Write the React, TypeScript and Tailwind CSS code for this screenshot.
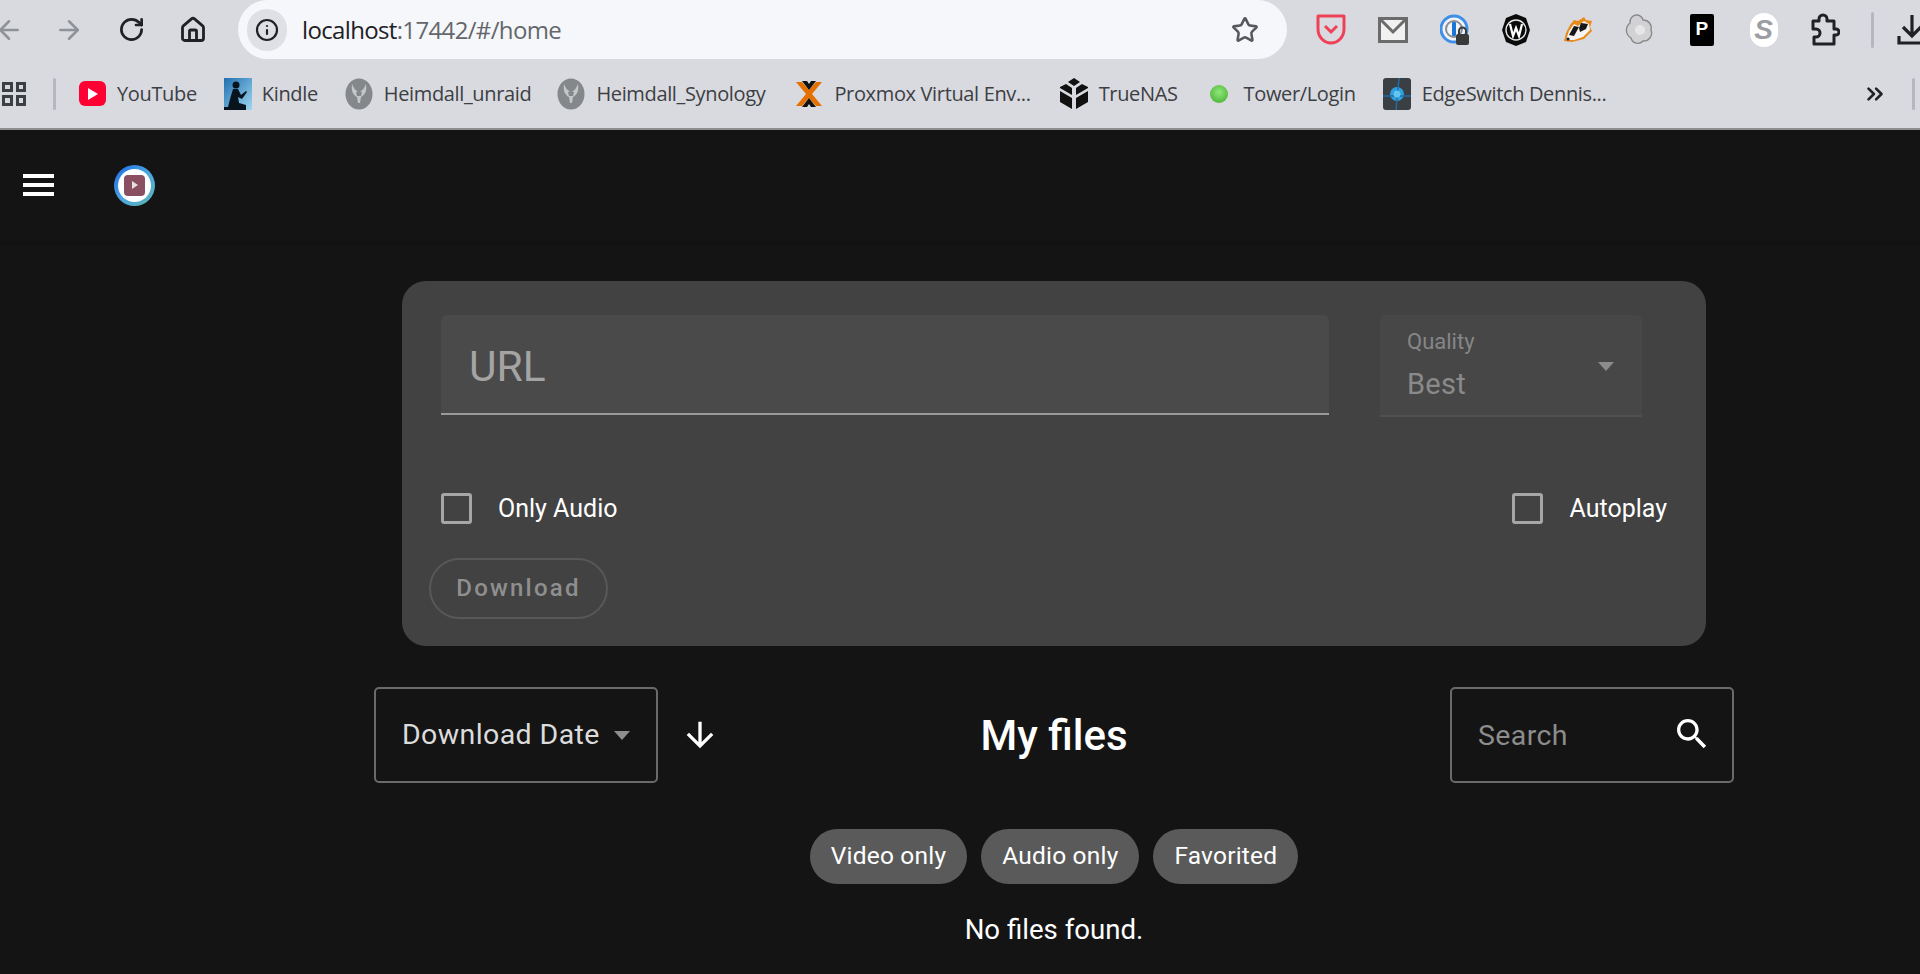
import { RotateCw, Home, Star, ArrowLeft, ArrowRight, ChevronsRight, Info } from 'lucide-react';

const chromeFont = "[font-family:'Open_Sans','Noto_Sans',sans-serif]";

function HeimdallIcon() {
  return (
    <svg width="28" height="32" viewBox="0 0 28 32">
      <ellipse cx="14" cy="16" rx="13.5" ry="15.5" fill="#85888a" />
      <path d="M7 6c-1 7 1 11 5 13l1 6h2l1-6c4-2 6-6 5-13-2 4-3 6-5 7l-2 3-2-3c-2-1-3-3-5-7z" fill="#c4c6c7" />
      <path d="M11 14h6l-1 4h-4z" fill="#85888a" />
    </svg>
  );
}

function KindleIcon() {
  return (
    <svg width="28" height="32" viewBox="0 0 28 32">
      <defs>
        <linearGradient id="kindleSky" x1="0" y1="0" x2="1" y2="1">
          <stop offset="0" stopColor="#1f6fb0" />
          <stop offset="1" stopColor="#9fd8f0" />
        </linearGradient>
      </defs>
      <rect width="28" height="32" fill="url(#kindleSky)" />
      <circle cx="12" cy="7" r="3.5" fill="#07141d" />
      <path d="M9 11h5l3 6 5-4 1 1-5 7-4-2 1 6 7 2v5H0v-3h4l2-8z" fill="#07141d" />
    </svg>
  );
}

function ProxmoxIcon() {
  return (
    <svg width="28" height="28" viewBox="0 0 28 28">
      <path d="M1 2h6l7 8 7-8h6L17 14l10 12h-6l-7-8-7 8H1l10-12z" fill="#e57000" />
      <path d="M7 1h5l2 3 2-3h5l-7 9zM7 27h5l2-3 2 3h5l-7-9z" fill="#111" />
    </svg>
  );
}

function TrueNasIcon() {
  return (
    <svg width="28" height="32" viewBox="0 0 28 32">
      <path d="M14 0l6 4-6 4-6-4zM6 6l6 4v7L0 10v-1zM22 6l6 3v1l-12 7v-7z" fill="#111" />
      <path d="M0 13l12 7v11L0 24zM28 13v11l-12 7V20z" fill="#111" />
    </svg>
  );
}

function EdgeSwitchIcon() {
  return (
    <svg width="28" height="32" viewBox="0 0 28 32">
      <rect width="28" height="32" rx="3" fill="#3a3f44" />
      <circle cx="14" cy="16" r="7" fill="#2f9fe0" />
      <path d="M0 18h28M16 0l-3 32" stroke="#1f6ea8" strokeWidth="1.4" />
      <circle cx="14" cy="16" r="3.5" fill="#63c5f2" />
    </svg>
  );
}

const bookmarks = [
  { label: 'Heimdall_unraid', icon: <HeimdallIcon />, left: 'ml-[27px]' },
  { label: 'Heimdall_Synology', icon: <HeimdallIcon />, left: 'ml-[26px]' },
  { label: 'Proxmox Virtual Env...', icon: <ProxmoxIcon />, left: 'ml-[30px]' },
  { label: 'TrueNAS', icon: <TrueNasIcon />, left: 'ml-[29px]' },
];

function ChromeBar() {
  return (
    <div className={`bg-[#d9dae0] text-[#3c4043] ${chromeFont}`}>
      {/* Toolbar */}
      <div className="flex h-[59px] items-center overflow-hidden">
        <ArrowLeft className="ml-[-6px] h-[30px] w-[30px] shrink-0 text-[#8f9297]" strokeWidth={2} />
        <ArrowRight className="ml-[30px] h-[30px] w-[30px] shrink-0 text-[#8f9297]" strokeWidth={2} />
        <RotateCw className="ml-[34px] h-[27px] w-[27px] shrink-0 text-[#202124]" strokeWidth={2.4} />
        <Home className="ml-[34px] h-[28px] w-[28px] shrink-0 text-[#202124]" strokeWidth={2.4} />
        <div className="ml-[31px] flex h-[59px] w-[1049px] shrink-0 items-center rounded-full bg-[#f6f7fa] pl-[9px] pr-[28px]">
          <div className="flex h-[42px] w-[40px] items-center justify-center rounded-full bg-[#dfe0e5]">
            <Info className="h-[24px] w-[24px] text-[#202124]" strokeWidth={2.2} />
          </div>
          <span className="ml-[15px] text-[24px] tracking-[-0.65px] text-[#202124]">
            localhost<span className="text-[#63676c]">:17442/#/home</span>
          </span>
          <Star className="ml-auto h-[28px] w-[28px] text-[#55585c]" strokeWidth={2.2} />
        </div>

        {/* Extensions */}
        <div className="ml-[29px] flex shrink-0 items-center gap-[31.8px]">
          <svg width="30" height="32" viewBox="0 0 30 32" fill="none">
            <path d="M2 2h26v13c0 8-6 14-13 14S2 23 2 15z" stroke="#ef4056" strokeWidth="3" strokeLinejoin="round" />
            <path d="M9 12l6 6 6-6" stroke="#ef4056" strokeWidth="3" />
          </svg>
          <svg width="30" height="26" viewBox="0 0 30 26">
            <rect x="1.5" y="1.5" width="27" height="23" fill="#f1f1f1" stroke="#6b6b6b" strokeWidth="3" />
            <path d="M2 2l13 13L28 2" fill="none" stroke="#6b6b6b" strokeWidth="3" />
          </svg>
          <svg width="30" height="34" viewBox="0 0 30 34">
            <circle cx="14" cy="16" r="13" fill="#f1f3f6" stroke="#3f8fe8" strokeWidth="3" />
            <circle cx="14" cy="16" r="8" fill="none" stroke="#8a8d92" strokeWidth="2" />
            <rect x="12" y="9" width="4" height="14" rx="1" fill="#1c74d8" />
            <rect x="16" y="21" width="13" height="11" rx="2" fill="#3a3a3a" />
            <path d="M19 21v-3a3.500 3.500 0 0 1 7 0v3" fill="none" stroke="#3a3a3a" strokeWidth="2" />
          </svg>
          <svg width="30" height="34" viewBox="0 0 30 34">
            <path d="M15 1l10 4 4 12-4 12-10 4-10-4-4-12 4-12z" fill="#0b0b0b" />
            <circle cx="15" cy="17" r="10" fill="none" stroke="#e8e8e8" strokeWidth="1.4" />
            <path d="M9 11l3 12 3-8 3 8 3-12" fill="none" stroke="#fff" strokeWidth="2.2" />
          </svg>
          <svg width="30" height="30" viewBox="0 0 30 30">
            <path d="M1 26l2-8 4-8 4-5 4 1 6-4 2 3 6 1-2 6 2 4-8 8-12 3z" fill="#e88a1a" />
            <path d="M3 25l3-9 5-7 4 2 6-5 5 3 1 6-7 7-9 3z" fill="#f4f4f4" />
            <path d="M6 20l5-9 5 1-5 9zM18 8l7 1-2 5-6 3-1-4z" fill="#181818" />
            <circle cx="5" cy="24" r="1.6" fill="#181818" />
          </svg>
          <svg width="30" height="34" viewBox="0 0 30 34">
            <path d="M11 2a7 7 0 0 1 7 5 8 8 0 0 1 8 10 8 8 0 0 1-8 11 7 7 0 0 1-12-3 9 9 0 0 1-1-15 7 7 0 0 1 6-8z" fill="#d2d2d4" stroke="#8a8a8c" strokeWidth="1.4" />
            <circle cx="15" cy="17" r="5" fill="#e6e6e8" />
          </svg>
          <div className="mx-[3px] flex h-[32px] w-[24px] items-center justify-center rounded-[2px] bg-black text-[19px] font-bold text-white [font-family:'Liberation_Sans',sans-serif]">
            P
          </div>
          <div className="mx-[1px] flex h-[34px] w-[28px] items-center justify-center rounded-full bg-white text-[28px] font-bold italic text-[#9c9ea3] [font-family:'Liberation_Sans',sans-serif]">
            S
          </div>
          <svg width="30" height="34" viewBox="0 0 30 34" fill="none">
            <path d="M3 8h6V6a4 4 0 0 1 8 0v2h7v8h2a3 3 0 0 1 0 6h-2v9H4v-7h2a4 4 0 0 0 0-8H3z" stroke="#202124" strokeWidth="3" strokeLinejoin="round" />
          </svg>
          <div className="ml-[-1px] h-[36px] w-[3px] rounded-sm bg-[#b4b7c0]" />
          <svg className="ml-[-9px]" width="30" height="32" viewBox="0 0 30 32" fill="none">
            <path d="M15 1v21M6 13l9 9 9-9M2 22v7h26v-7" stroke="#202124" strokeWidth="3.2" />
          </svg>
        </div>
      </div>

      {/* Bookmarks */}
      <div className="flex h-[71px] items-center border-b-2 border-[#8e8e90] text-[20px] tracking-[-0.35px] text-[#3c4043]">
        <div className="ml-[2px] grid h-[24px] w-[24px] grid-cols-2 gap-[3px]">
          <span className="border-[3px] border-[#3c4043]" />
          <span className="border-[3px] border-[#3c4043]" />
          <span className="border-[3px] border-[#3c4043]" />
          <span className="border-[3px] border-[#3c4043]" />
        </div>
        <div className="ml-[27px] h-[32px] w-[3px] rounded-sm bg-[#b4b7c0]" />

        <div className="ml-[23px] flex items-center gap-[11px] whitespace-nowrap">
          <div className="flex h-[25px] w-[27px] items-center justify-center rounded-[6px] bg-[#ff0033]">
            <svg width="12" height="14" viewBox="0 0 12 14">
              <path d="M1 1l10 6-10 6z" fill="#fff" />
            </svg>
          </div>
          <span>YouTube</span>
        </div>
        <div className="ml-[27px] flex items-center gap-[10px] whitespace-nowrap">
          <KindleIcon />
          <span>Kindle</span>
        </div>
        {bookmarks.map((item) => (
          <div key={item.label} className={`${item.left} flex items-center gap-[11px] whitespace-nowrap`}>
            {item.icon}
            <span>{item.label}</span>
          </div>
        ))}
        <div className="ml-[32px] flex items-center gap-[16px] whitespace-nowrap">
          <span className="h-[18px] w-[18px] rounded-full bg-[radial-gradient(circle_at_50%_40%,#8fe87a,#3fa82a)]" />
          <span>Tower/Login</span>
        </div>
        <div className="ml-[27px] flex items-center gap-[11px] whitespace-nowrap">
          <EdgeSwitchIcon />
          <span>EdgeSwitch Dennis...</span>
        </div>
        <ChevronsRight className="ml-auto h-[26px] w-[26px] text-[#202124]" strokeWidth={2.4} />
        <div className="ml-[24px] mr-[5px] h-[32px] w-[3px] rounded-sm bg-[#b4b7c0]" />
      </div>
    </div>
  );
}

function Checkbox({ label }: { label: string }) {
  return (
    <div className="flex items-center gap-[26px]">
      <div className="h-[31px] w-[31px] rounded-[3px] border-[3px] border-[#a6a6a6]" />
      <span className="text-[25px] text-white">{label}</span>
    </div>
  );
}

function Caret({ color }: { color: string }) {
  return <div className={`h-0 w-0 border-x-[8.5px] border-t-[9px] border-x-transparent ${color}`} />;
}

export default function App() {
  return (
    <div className="flex h-[974px] flex-col overflow-hidden bg-[#141414] [font-family:Roboto,sans-serif]">
      <ChromeBar />

      {/* App toolbar */}
      <header className="flex h-[116px] shrink-0 items-center border-b-[6px] border-[#121212] pl-[23px]">
        <div className="flex w-[31px] flex-col gap-[5px]">
          <span className="h-[4px] bg-white" />
          <span className="h-[4px] bg-white" />
          <span className="h-[4px] bg-white" />
        </div>
        <div className="ml-[60px] flex h-[41px] w-[41px] items-center justify-center rounded-full bg-gradient-to-br from-[#1f66e8] via-[#4aa5e0] to-[#5fb6b0] p-[4px]">
          <div className="flex h-full w-full items-center justify-center rounded-full bg-white">
            <div className="flex h-[21px] w-[21px] items-center justify-center rounded-[4px] bg-[#8a4f60]">
              <div className="ml-[1px] h-0 w-0 border-y-[4px] border-l-[6px] border-y-transparent border-l-[#e8dfe2]" />
            </div>
          </div>
        </div>
      </header>

      <main className="flex flex-col items-center pl-[188px] pt-[35px]">
        {/* Download card */}
        <section className="flex h-[365px] w-[1304px] flex-col rounded-[24px] bg-[#424242] pt-[34px]">
          <div className="flex items-start pl-[39px]">
            <div className="flex h-[100px] w-[888px] items-center rounded-t-[6px] border-b-2 border-[#9a9a9a] bg-[#4a4a4a] pl-[28px] pt-[6px] text-[42.5px] text-[#a4a4a4]">
              URL
            </div>
            <div className="ml-[51px] flex h-[102px] w-[262px] items-center justify-between rounded-t-[6px] border-b-2 border-[#505050] bg-[#474747] pl-[27px] pr-[28px]">
              <div className="mb-[2px] flex flex-col">
                <span className="text-[22px] leading-[26px] text-[#868686]">Quality</span>
                <span className="mt-[13px] text-[29px] leading-[32px] tracking-[0.3px] text-[#8a8a8a]">Best</span>
              </div>
              <div className="mt-[3px]">
                <Caret color="border-t-[#8c8c8c]" />
              </div>
            </div>
          </div>

          <div className="mt-[73px] flex items-center justify-between pl-[39px] pr-[39px]">
            <Checkbox label="Only Audio" />
            <Checkbox label="Autoplay" />
          </div>

          <div className="mt-[30px] pl-[27px]">
            <div className="flex h-[61px] w-[179px] items-center justify-center rounded-full border-2 border-[#585858] text-[24px] font-medium tracking-[2.2px] text-[#8f8f8f]">
              Download
            </div>
          </div>
        </section>

        {/* Sort, title, search */}
        <section className="mt-[41px] grid w-[1360px] grid-cols-[1fr_auto_1fr] items-center">
          <div className="flex items-center">
            <div className="flex h-[96px] w-[284px] items-center justify-between rounded-[5px] border-2 border-[#6a6a6a] pl-[26px] pr-[26px] text-[28.5px] tracking-[0.4px] text-[#dcdcdc]">
              <span>Download Date</span>
              <Caret color="border-t-[#8e8e8e]" />
            </div>
            <svg className="ml-[22px]" width="40" height="40" viewBox="0 0 24 24" fill="#fff">
              <path d="M20 12l-1.410-1.410L13 16.170V4h-2v12.170l-5.580-5.590L4 12l8 8 8-8z" />
            </svg>
          </div>
          <h1 className="text-[42px] font-medium text-white">My files</h1>
          <div className="flex justify-end">
            <div className="flex h-[96px] w-[284px] items-center justify-between rounded-[5px] border-2 border-[#6a6a6a] pl-[26px] pr-[20px]">
              <span className="mt-[3px] text-[28.5px] tracking-[0.4px] text-[#8c8c8c]">Search</span>
              <svg className="mb-[2px]" width="40" height="40" viewBox="0 0 24 24" fill="#fff">
                <path d="M15.5 14h-.79l-.28-.27C15.41 12.59 16 11.11 16 9.5 16 5.91 13.09 3 9.5 3S3 5.91 3 9.5 5.91 16 9.5 16c1.61 0 3.09-.59 4.23-1.57l.27.28v.79l5 4.99L20.49 19l-4.99-5zm-6 0C7.010 14 5 11.990 5 9.500S7.010 5 9.500 5 14 7.010 14 9.500 11.990 14 9.500 14z" />
              </svg>
            </div>
          </div>
        </section>

        {/* Filter chips */}
        <div className="mt-[46px] flex gap-[14px]">
          {['Video only', 'Audio only', 'Favorited'].map((chip) => (
            <div key={chip} className="flex h-[55px] items-center rounded-full bg-[#5a5a5a] px-[21px] text-[24.5px] tracking-[0.2px] text-white">
              {chip}
            </div>
          ))}
        </div>

        <p className="mt-[25px] text-[27.6px] text-white">No files found.</p>
      </main>
    </div>
  );
}
